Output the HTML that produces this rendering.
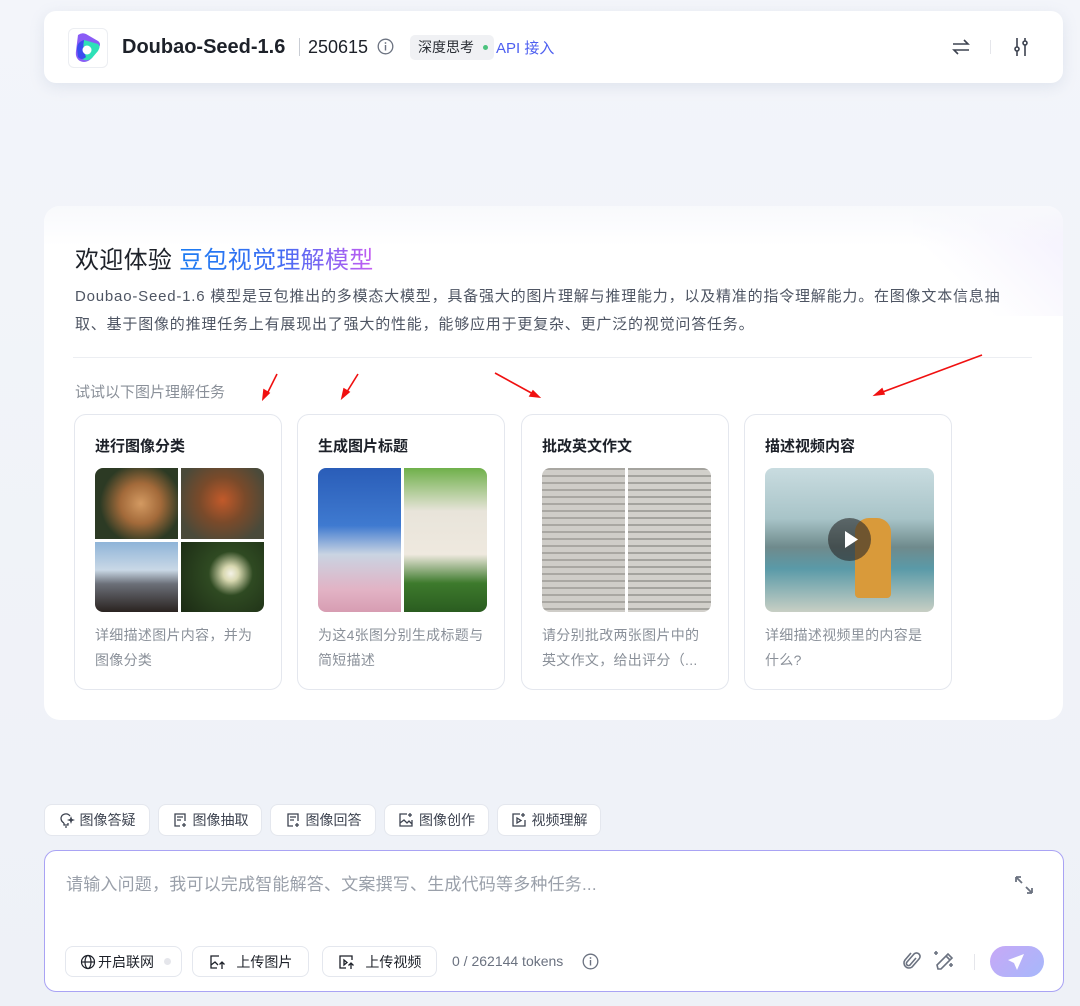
<!DOCTYPE html>
<html><head><meta charset="utf-8"><style>
*{box-sizing:border-box;margin:0;padding:0}
body{width:1080px;height:1006px;overflow:hidden;background:linear-gradient(180deg,#f3f5fa 0%,#eef1f7 100%);font-family:"Liberation Sans","Noto Sans CJK SC",sans-serif;color:#1d2129;position:relative}
.abs{position:absolute}
.hdr{left:44px;top:11px;width:1019px;height:72px;background:#fff;border-radius:12px;box-shadow:0 4px 14px rgba(200,208,225,.45)}
.main{left:44px;top:206px;width:1019px;height:514px;background:#fff;border-radius:16px;overflow:hidden}
.card{top:414px;width:208px;height:276px;border:1px solid #e4e7ee;border-radius:12px;background:#fff}
.card h4{position:absolute;left:20px;top:20px;font-size:15px;font-weight:bold;color:#1d2129}
.card .im{position:absolute;left:20px;top:53px;width:169px;height:144px;border-radius:8px;overflow:hidden}
.card p{position:absolute;left:20px;top:208px;width:168px;font-size:14px;line-height:25px;color:#8a9099;letter-spacing:.3px}
.chip{top:804px;height:32px;border:1px solid #e4e7ee;border-radius:8px;background:#fff;font-size:14px;color:#3d4350;display:flex;align-items:center;justify-content:center;gap:5px}
.btn{top:946px;height:31px;border:1px solid #e4e7ee;border-radius:8px;background:#fff;font-size:14px;color:#1d2129;display:flex;align-items:center;justify-content:center;gap:6px}
</style></head><body>
<div class="abs hdr"></div>
<div class="abs" style="left:68px;top:28px;width:40px;height:40px;border:1px solid #eceef2;border-radius:6px;background:#fff"></div>
<svg class="abs" style="left:72px;top:31px" width="32" height="34" viewBox="0 0 32 34"><path d="M6 4 Q10 1 14 3 L26 10 Q30 13 26 18 L20 27 Q14 33 8 30 Q3 27 4 20Z" fill="#8a5cf6"/><path d="M12 9 L26 13 Q29 15 26 20 L20 27 Q15 31 10 28Z" fill="#2ee0b8"/><path d="M5 18 Q5 11 12 9 Q10 17 14 26 Q10 30 6 26Z" fill="#3a4cf0"/><circle cx="15" cy="19" r="4.5" fill="#fff"/></svg>
<div class="abs" style="left:122px;top:36px;font-size:20px;font-weight:bold;color:#1d2129">Doubao-Seed-1.6</div>
<div class="abs" style="left:299px;top:38px;width:1px;height:18px;background:#c9cdd4"></div>
<div class="abs" style="left:308px;top:37px;font-size:18px;color:#1d2129">250615</div>
<svg class="abs" style="left:377px;top:38px" width="17" height="17" viewBox="0 0 17 17"><circle cx="8.5" cy="8.5" r="7.3" fill="none" stroke="#6b7280" stroke-width="1.3"/><rect x="7.8" y="7" width="1.4" height="5.5" fill="#6b7280"/><circle cx="8.5" cy="5" r=".9" fill="#6b7280"/></svg>
<div class="abs" style="left:410px;top:35px;width:84px;height:25px;background:#f0f1f4;border-radius:5px;font-size:14px;line-height:25px;padding-left:8px;color:#2b2f36">深度思考</div>
<div class="abs" style="left:483px;top:45px;width:5px;height:5px;border-radius:50%;background:#4bc27d"></div>
<div class="abs" style="left:496px;top:37px;font-size:15px;color:#4d5ff0">API 接入</div>
<svg class="abs" style="left:950px;top:37px" width="22" height="20" viewBox="0 0 22 20" fill="none" stroke="#3d4350" stroke-width="1.6"><path d="M3 7h15l-4-4M19 13H4l4 4"/></svg>
<div class="abs" style="left:990px;top:40px;width:1px;height:14px;background:#e5e6eb"></div>
<svg class="abs" style="left:1011px;top:36px" width="20" height="22" viewBox="0 0 20 22" fill="none" stroke="#3d4350" stroke-width="1.6"><path d="M6 2v9M6 15v5M14 2v3M14 9v11"/><circle cx="6" cy="13" r="2"/><circle cx="14" cy="7" r="2"/></svg>

<div class="abs main">
 <div class="abs" style="right:0;top:0;width:150px;height:110px;background:linear-gradient(225deg,#f3f0fd 0%,rgba(255,255,255,0) 70%)"></div>
 <div class="abs" style="left:0;top:0;width:1019px;height:40px;background:linear-gradient(180deg,#f8f9fc,rgba(255,255,255,0))"></div>
</div>
<div class="abs" style="left:75px;top:240px;font-size:24px;color:#1d2129;letter-spacing:.3px">欢迎体验 <span style="background:linear-gradient(90deg,#1b7cf2 0%,#3d6df3 50%,#c65cf2 100%);-webkit-background-clip:text;background-clip:text;color:transparent">豆包视觉理解模型</span></div>
<div class="abs" style="left:75px;top:283px;width:940px;font-size:15px;line-height:28px;color:#4e5563;letter-spacing:.8px">Doubao-Seed-1.6 模型是豆包推出的多模态大模型，具备强大的图片理解与推理能力，以及精准的指令理解能力。在图像文本信息抽取、基于图像的推理任务上有展现出了强大的性能，能够应用于更复杂、更广泛的视觉问答任务。</div>
<div class="abs" style="left:73px;top:357px;width:959px;height:1px;background:#eceef2"></div>
<div class="abs" style="left:75px;top:381px;font-size:15px;color:#8a9099">试试以下图片理解任务</div>

<div class="abs card" style="left:74px"><h4>进行图像分类</h4>
 <div class="im">
  <div class="abs" style="left:0;top:0;width:83px;height:71px;background:radial-gradient(circle at 55% 50%,#d39a62 0%,#a36a3a 35%,#2c3a24 70%)"></div>
  <div class="abs" style="left:86px;top:0;width:83px;height:71px;background:radial-gradient(circle at 50% 45%,#c25a2a 0%,#7a4a2a 40%,#4a4a3a 80%)"></div>
  <div class="abs" style="left:0;top:74px;width:83px;height:70px;background:linear-gradient(180deg,#8fb4d8 0%,#c9d8e6 40%,#6b6f78 60%,#2a2320 100%)"></div>
  <div class="abs" style="left:86px;top:74px;width:83px;height:70px;background:radial-gradient(circle at 60% 45%,#f4f2e6 0%,#d8d8b0 12%,#2f4a22 35%,#1b2a14 100%)"></div>
 </div>
 <p>详细描述图片内容，并为图像分类</p></div>
<div class="abs card" style="left:297px"><h4>生成图片标题</h4>
 <div class="im">
  <div class="abs" style="left:0;top:0;width:83px;height:144px;background:linear-gradient(180deg,#2a5db8 0%,#3f7ad0 40%,#c9d4e2 60%,#e2b2c4 85%,#d79db2 100%)"></div>
  <div class="abs" style="left:86px;top:0;width:83px;height:144px;background:linear-gradient(180deg,#6fb04a 0%,#e8e4da 30%,#efe9df 60%,#3d7a2c 80%,#2a5c20 100%)"></div>
 </div>
 <p>为这4张图分别生成标题与简短描述</p></div>
<div class="abs card" style="left:521px"><h4>批改英文作文</h4>
 <div class="im">
  <div class="abs" style="left:0;top:0;width:83px;height:144px;background:repeating-linear-gradient(180deg,#a9a7a2 0 2px,#cfcdc8 2px 7px)"></div>
  <div class="abs" style="left:86px;top:0;width:83px;height:144px;background:repeating-linear-gradient(180deg,#a4a39e 0 2px,#d2d0cb 2px 7px)"></div>
 </div>
 <p>请分别批改两张图片中的英文作文，给出评分（...</p></div>
<div class="abs card" style="left:744px"><h4>描述视频内容</h4>
 <div class="im" style="background:linear-gradient(180deg,#c9dce0 0%,#a8c4c8 35%,#6f8a8c 55%,#5a9aa8 70%,#c8cfc4 100%)">
  <div class="abs" style="left:90px;top:50px;width:36px;height:80px;background:#d99a3a;border-radius:14px 14px 4px 4px"></div>
  <div class="abs" style="left:63px;top:50px;width:43px;height:43px;border-radius:50%;background:rgba(40,40,40,.6)"></div>
  <svg class="abs" style="left:78px;top:62px" width="16" height="19"><path d="M2 1L15 9.5 2 18Z" fill="#fff"/></svg>
 </div>
 <p>详细描述视频里的内容是什么?</p></div>

<svg class="abs" style="left:0;top:0" width="1080" height="1006" fill="#f01010" stroke="#f01010" stroke-width="1.6">
 <line x1="277" y1="374" x2="266" y2="396"/><path d="M263 399l1-9 5 3z"/>
 <line x1="358" y1="374" x2="345" y2="395"/><path d="M342 398l2-9 5 3z"/>
 <line x1="495" y1="373" x2="535" y2="395"/><path d="M539 397l-9-1 3-5z"/>
 <line x1="982" y1="355" x2="880" y2="393"/><path d="M875 395l7-6 2 5z"/>
 <line x1="313" y1="922" x2="290" y2="936"/><path d="M286 938l5-7 3 5z"/>
 <line x1="482" y1="917" x2="432" y2="943"/><path d="M428 945l6-7 3 5z"/>
</svg>

<div class="abs chip" style="left:44px;width:106px"><svg width="16" height="16" viewBox="0 0 16 16" fill="none" stroke="#3d4350" stroke-width="1.3"><path d="M5 11c-2-1-3-3-3-5a5 5 0 0 1 9-2M5 11v2h4v-2M6 15h2"/><path d="M12 6l.5 1.5L14 8l-1.5.5L12 10l-.5-1.5L10 8l1.5-.5z"/></svg>图像答疑</div>
<div class="abs chip" style="left:158px;width:104px"><svg width="16" height="16" viewBox="0 0 16 16" fill="none" stroke="#3d4350" stroke-width="1.3"><path d="M8 14H3V2h10v7M5 5h6M5 8h4M12 11v4M10 13h4"/></svg>图像抽取</div>
<div class="abs chip" style="left:270px;width:106px"><svg width="16" height="16" viewBox="0 0 16 16" fill="none" stroke="#3d4350" stroke-width="1.3"><path d="M8 14H3V2h10v7M5 5h6M5 8h4M12 11v4M10 13h4"/></svg>图像回答</div>
<div class="abs chip" style="left:384px;width:105px"><svg width="16" height="16" viewBox="0 0 16 16" fill="none" stroke="#3d4350" stroke-width="1.3"><path d="M9 2H2v12h12V8M2 11l4-3 3 3 2-2 3 3M12 1v4M10 3h4"/></svg>图像创作</div>
<div class="abs chip" style="left:497px;width:104px"><svg width="16" height="16" viewBox="0 0 16 16" fill="none" stroke="#3d4350" stroke-width="1.3"><path d="M9 2H2v12h12V8M6 6v5l4-2.5zM12 1v4M10 3h4"/></svg>视频理解</div>

<div class="abs" style="left:44px;top:850px;width:1020px;height:142px;border:1px solid #a9a3f4;border-radius:12px;background:#fff"></div>
<div class="abs" style="left:66px;top:870px;font-size:17px;color:#9aa0aa;letter-spacing:.2px">请输入问题，我可以完成智能解答、文案撰写、生成代码等多种任务...</div>
<svg class="abs" style="left:1013px;top:874px" width="22" height="22" viewBox="0 0 22 22" fill="none" stroke="#6b7280" stroke-width="1.8"><path d="M3 3l6 6M3 3v5M3 3h5M19 19l-6-6M19 19v-5M19 19h-5"/></svg>
<div class="abs btn" style="left:65px;width:117px;justify-content:flex-start;padding-left:14px;gap:2px"><svg width="16" height="16" viewBox="0 0 16 16" fill="none" stroke="#1d2129" stroke-width="1.2"><circle cx="8" cy="8" r="6.5"/><ellipse cx="8" cy="8" rx="3" ry="6.5"/><path d="M1.5 8h13"/></svg>开启联网<span style="display:inline-block;width:7px;height:7px;border-radius:50%;background:#e5e6eb;margin-left:8px"></span></div>
<div class="abs btn" style="left:192px;width:117px"><svg width="18" height="16" viewBox="0 0 18 16" fill="none" stroke="#1d2129" stroke-width="1.3"><path d="M10 2H2v12h6M2 11l4-3 3 3M13 15V8M10.5 10.5L13 8l2.5 2.5"/></svg>&nbsp;上传图片</div>
<div class="abs btn" style="left:322px;width:115px"><svg width="18" height="16" viewBox="0 0 18 16" fill="none" stroke="#1d2129" stroke-width="1.3"><path d="M14 6V2H2v12h6M6 6v5l3-2.5zM13 15V9M10.5 11.5L13 9l2.5 2.5"/></svg>&nbsp;上传视频</div>
<div class="abs" style="left:452px;top:953px;font-size:14px;color:#6b7280">0 / 262144 tokens</div>
<svg class="abs" style="left:582px;top:953px" width="17" height="17" viewBox="0 0 17 17"><circle cx="8.5" cy="8.5" r="7.3" fill="none" stroke="#6b7280" stroke-width="1.3"/><rect x="7.8" y="7" width="1.4" height="5.5" fill="#6b7280"/><circle cx="8.5" cy="5" r=".9" fill="#6b7280"/></svg>
<svg class="abs" style="left:902px;top:950px" width="20" height="22" viewBox="0 0 20 22" fill="none" stroke="#6b7280" stroke-width="1.6"><path d="M14 8l-6 7a2 2 0 0 1-3-3l7-8a3.5 3.5 0 0 1 5 5l-7 8a5 5 0 0 1-7-7l6-7"/></svg>
<svg class="abs" style="left:932px;top:948px" width="24" height="24" viewBox="0 0 24 24" fill="none" stroke="#6b7280" stroke-width="1.6"><path d="M6 21l-1-4L16 6l4 4L9 21zM14 8l4 4M4 3v4M2 5h4M19 15v4M17 17h4"/></svg>
<div class="abs" style="left:974px;top:954px;width:1px;height:16px;background:#e5e6eb"></div>
<div class="abs" style="left:990px;top:946px;width:54px;height:31px;border-radius:16px;background:linear-gradient(135deg,#c7a8f6 0%,#a6b8fb 100%)"></div>
<svg class="abs" style="left:1007px;top:953px" width="18" height="18" viewBox="0 0 18 18"><path d="M17 1L1 7l6 3 3 7z" fill="#fff"/></svg>
</body></html>
